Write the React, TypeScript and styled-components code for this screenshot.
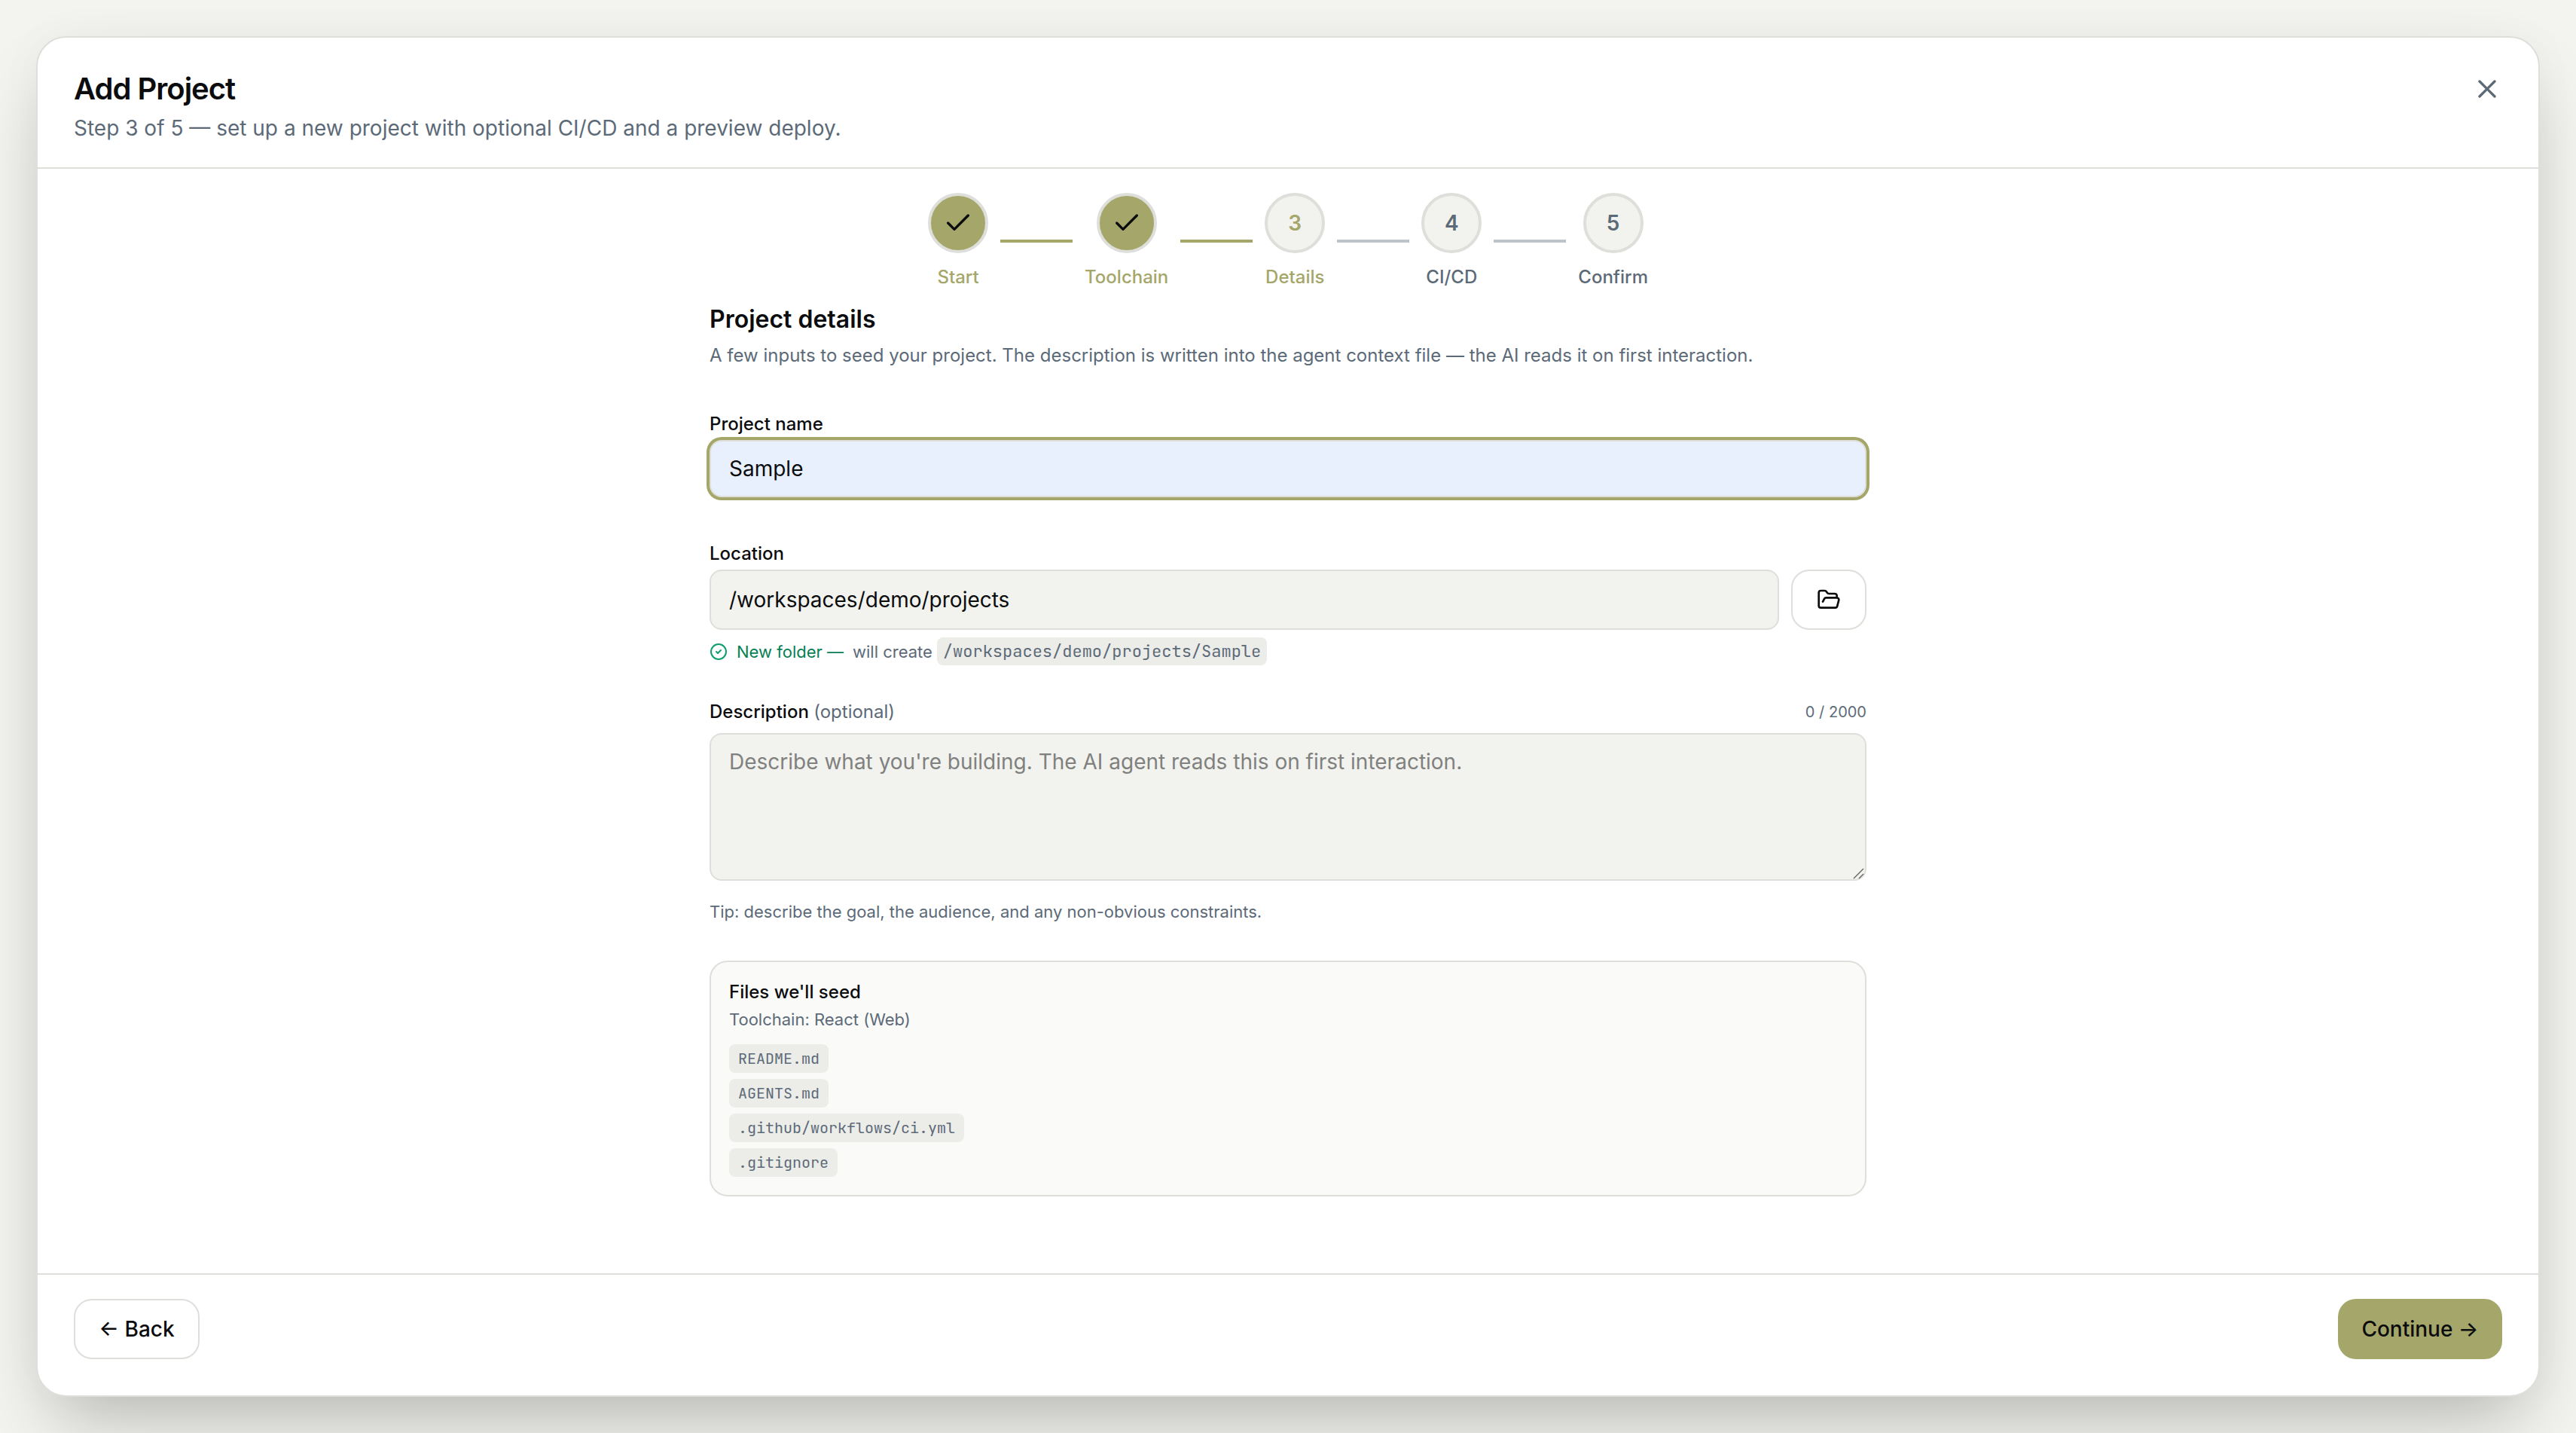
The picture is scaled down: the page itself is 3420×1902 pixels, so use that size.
import React, { useState } from "react";
import styled, { createGlobalStyle, css } from "styled-components";
import { Check, CircleCheck, FolderOpen, X } from "lucide-react";

const color = {
  ink: "#0b0c0e",
  muted: "#5c6a78",
  line: "#dedfda",
  field: "#f2f3ee",
  olive: "#a5a66a",
  chip: "#ecede9",
  green: "#087f54",
};

const GlobalStyle = createGlobalStyle`
  *, *::before, *::after { box-sizing: border-box; }
  body {
    margin: 0;
    background: #f2f3ee;
    color: ${color.ink};
    font-family: Inter, "Liberation Sans", sans-serif;
    -webkit-font-smoothing: antialiased;
  }
  h1, h2, p, ul, ol { margin: 0; padding: 0; }
  button, input, textarea { font: inherit; color: inherit; }
`;

const Backdrop = styled.div`
  height: 1902px;
  padding: 48px;
  overflow: hidden;
  background: #f3f4ef;
`;

const Dialog = styled.section`
  height: 100%;
  display: flex;
  flex-direction: column;
  background: #fff;
  border: 2px solid ${color.line};
  border-radius: 40px;
  box-shadow: 0 50px 100px -24px rgba(0, 0, 0, 0.25), 0 0 64px rgba(40, 40, 10, 0.03);
`;

const Header = styled.header`
  height: 174px;
  display: flex;
  justify-content: space-between;
  align-items: flex-start;
  padding: 40px 48px 0;
  border-bottom: 2px solid ${color.line};
`;

const Title = styled.h1`
  font-size: 40px;
  line-height: 56px;
  font-weight: 600;
  letter-spacing: -0.025em;
`;

const Subtitle = styled.p`
  margin-top: 4px;
  font-size: 28px;
  line-height: 41px;
  color: ${color.muted};
`;

const CloseButton = styled.button`
  display: flex;
  padding: 0;
  margin-top: 8px;
  border: 0;
  background: none;
  color: ${color.muted};
`;

const Body = styled.main`
  flex: 1;
  display: flex;
  flex-direction: column;
  align-items: center;
  padding-top: 32px;
`;

const Stepper = styled.ol`
  display: flex;
  align-items: center;
  gap: 16px;
  list-style: none;
`;

const Step = styled.li<{ $reached: boolean }>`
  display: flex;
  flex-direction: column;
  align-items: center;
  gap: 16px;
  font-size: 24px;
  line-height: 32px;
  font-weight: 500;
  color: ${(p) => (p.$reached ? color.olive : color.muted)};
`;

const StepCircle = styled.span<{ $done: boolean }>`
  width: 80px;
  height: 80px;
  display: flex;
  align-items: center;
  justify-content: center;
  border: 4px solid ${color.line};
  border-radius: 50%;
  font-size: 28px;
  font-weight: 600;
  background: ${color.field};
  ${(p) =>
    p.$done &&
    css`
      background: ${color.olive};
      color: ${color.ink};
    `}
`;

const StepLine = styled.li<{ $done: boolean }>`
  width: 96px;
  height: 4px;
  background: ${(p) => (p.$done ? color.olive : "#bec3c8")};
`;

const Form = styled.form`
  width: 1536px;
  padding-top: 20px;
`;

const SectionTitle = styled.h2`
  font-size: 32px;
  line-height: 40px;
  font-weight: 600;
`;

const SectionText = styled.p`
  margin-top: 12px;
  font-size: 24px;
  line-height: 32px;
  color: ${color.muted};
`;

const Field = styled.div<{ $top: number }>`
  display: flex;
  flex-direction: column;
  margin-top: ${(p) => p.$top}px;
`;

const LabelRow = styled.div`
  display: flex;
  justify-content: space-between;
  align-items: center;
`;

const Label = styled.label`
  font-size: 24px;
  line-height: 32px;
  font-weight: 500;
`;

const Optional = styled.span`
  font-weight: 400;
  color: ${color.muted};
`;

const Counter = styled.span`
  font-size: 20px;
  line-height: 32px;
  color: ${color.muted};
`;

const control = css`
  border: 2px solid ${color.line};
  border-radius: 16px;
  outline: none;
  background: ${color.field};
  font-size: 28px;
`;

const TextInput = styled.input<{ $active?: boolean }>`
  ${control}
  flex: 1;
  min-width: 0;
  height: 80px;
  padding: 0 24px;
  ${(p) =>
    p.$active &&
    css`
      flex: none;
      height: 76px;
      margin-top: 5px;
      background: #e8f0fe;
      box-shadow: 0 0 0 4px ${color.olive};
    `}
`;

const InputRow = styled.div`
  display: flex;
  gap: 16px;
  margin-top: 5px;
`;

const outlineButton = css`
  height: 80px;
  display: flex;
  align-items: center;
  justify-content: center;
  border: 2px solid ${color.line};
  border-radius: 24px;
  background: #fff;
`;

const BrowseButton = styled.button`
  ${outlineButton}
  width: 100px;
  padding: 0;
`;

const Status = styled.div`
  display: flex;
  align-items: center;
  margin-top: 10px;
  height: 37px;
  font-size: 22px;
  line-height: 36px;
  color: ${color.muted};
  svg { color: #0f9f6c; }
`;

const StatusLead = styled.span`
  margin: 0 12px;
  color: ${color.green};
`;

const Code = styled.code<{ $size: number }>`
  font-family: "JetBrains Mono", "DejaVu Sans Mono", monospace;
  font-size: ${(p) => p.$size}px;
  color: ${color.muted};
  background: ${color.chip};
  border-radius: 8px;
`;

const PathChip = styled(Code)`
  margin-left: 6px;
  padding: 0 8px;
  line-height: 37px;
`;

const TextAreaWrap = styled.div`
  position: relative;
  margin-top: 12px;
  height: 196px;
`;

const TextArea = styled.textarea`
  ${control}
  display: block;
  width: 100%;
  height: 100%;
  padding: 16px 24px;
  line-height: 40px;
  resize: none;
  &::placeholder { color: #80817f; opacity: 1; }
`;

const Grip = styled.svg`
  position: absolute;
  right: 3px;
  bottom: 2px;
`;

const Tip = styled.p`
  margin-top: 25px;
  font-size: 22px;
  line-height: 32px;
  color: ${color.muted};
`;

const FilesCard = styled.section`
  margin-top: 49px;
  padding: 24px;
  border: 2px solid ${color.line};
  border-radius: 24px;
  background: #fafaf8;
`;

const FilesTitle = styled.p`
  font-size: 24px;
  line-height: 32px;
  font-weight: 500;
`;

const FilesMeta = styled.p`
  margin-top: 4px;
  font-size: 22px;
  line-height: 32px;
  color: ${color.muted};
`;

const FileList = styled.ul`
  display: flex;
  flex-direction: column;
  align-items: flex-start;
  gap: 8px;
  margin-top: 17px;
  list-style: none;
`;

const FileItem = styled.li`
  display: flex;
`;

const FileChip = styled(Code)`
  padding: 0 12px;
  line-height: 38px;
`;

const Footer = styled.footer`
  display: flex;
  justify-content: space-between;
  padding: 32px 48px 48px;
  border-top: 2px solid ${color.line};
`;

const FooterButton = styled.button<{ $primary?: boolean }>`
  ${outlineButton}
  width: 167px;
  padding: 0;
  font-size: 28px;
  font-weight: 500;
  ${(p) =>
    p.$primary &&
    css`
      width: 218px;
      border: 0;
      background: ${color.olive};
    `}
`;

const steps = ["Start", "Toolchain", "Details", "CI/CD", "Confirm"];
const files = ["README.md", "AGENTS.md", ".github/workflows/ci.yml", ".gitignore"];
const currentStep = 2;

export default function App() {
  const [name, setName] = useState("Sample");
  const [location, setLocation] = useState("/workspaces/demo/projects");
  const [description, setDescription] = useState("");

  return (
    <Backdrop>
      <GlobalStyle />
      <Dialog>
        <Header>
          <div>
            <Title>Add Project</Title>
            <Subtitle>Step 3 of 5 — set up a new project with optional CI/CD and a preview deploy.</Subtitle>
          </div>
          <CloseButton aria-label="Close">
            <X size={40} strokeWidth={2} />
          </CloseButton>
        </Header>

        <Body>
          <Stepper>
            {steps.map((label, i) => (
              <React.Fragment key={label}>
                {i > 0 && <StepLine $done={i <= currentStep} />}
                <Step $reached={i <= currentStep}>
                  <StepCircle $done={i < currentStep}>
                    {i < currentStep ? <Check size={40} strokeWidth={2} /> : i + 1}
                  </StepCircle>
                  {label}
                </Step>
              </React.Fragment>
            ))}
          </Stepper>

          <Form onSubmit={(e) => e.preventDefault()}>
            <SectionTitle>Project details</SectionTitle>
            <SectionText>
              A few inputs to seed your project. The description is written into the agent context file — the AI reads it
              on first interaction.
            </SectionText>

            <Field $top={59}>
              <Label htmlFor="name">Project name</Label>
              <TextInput id="name" $active value={name} onChange={(e) => setName(e.target.value)} />
            </Field>

            <Field $top={59}>
              <Label htmlFor="location">Location</Label>
              <InputRow>
                <TextInput id="location" value={location} onChange={(e) => setLocation(e.target.value)} />
                <BrowseButton type="button" aria-label="Browse">
                  <FolderOpen size={32} strokeWidth={2} />
                </BrowseButton>
              </InputRow>
              <Status>
                <CircleCheck size={24} strokeWidth={2} />
                <StatusLead>New folder —</StatusLead>
                will create
                <PathChip $size={22}>{`${location}/${name}`}</PathChip>
              </Status>
            </Field>

            <Field $top={46}>
              <LabelRow>
                <Label htmlFor="description">
                  Description <Optional>(optional)</Optional>
                </Label>
                <Counter>{description.length} / 2000</Counter>
              </LabelRow>
              <TextAreaWrap>
                <TextArea
                  id="description"
                  placeholder="Describe what you're building. The AI agent reads this on first interaction."
                  value={description}
                  onChange={(e) => setDescription(e.target.value)}
                />
                <Grip width="15" height="15" viewBox="0 0 15 15" stroke="#636462" strokeWidth="1.4">
                  <path d="M1 14 14 1M8 14l6-6" />
                </Grip>
              </TextAreaWrap>
            </Field>
            <Tip>Tip: describe the goal, the audience, and any non-obvious constraints.</Tip>

            <FilesCard>
              <FilesTitle>Files we'll seed</FilesTitle>
              <FilesMeta>Toolchain: React (Web)</FilesMeta>
              <FileList>
                {files.map((file) => (
                  <FileItem key={file}>
                    <FileChip $size={20}>{file}</FileChip>
                  </FileItem>
                ))}
              </FileList>
            </FilesCard>
          </Form>
        </Body>

        <Footer>
          <FooterButton>← Back</FooterButton>
          <FooterButton $primary>Continue →</FooterButton>
        </Footer>
      </Dialog>
    </Backdrop>
  );
}
